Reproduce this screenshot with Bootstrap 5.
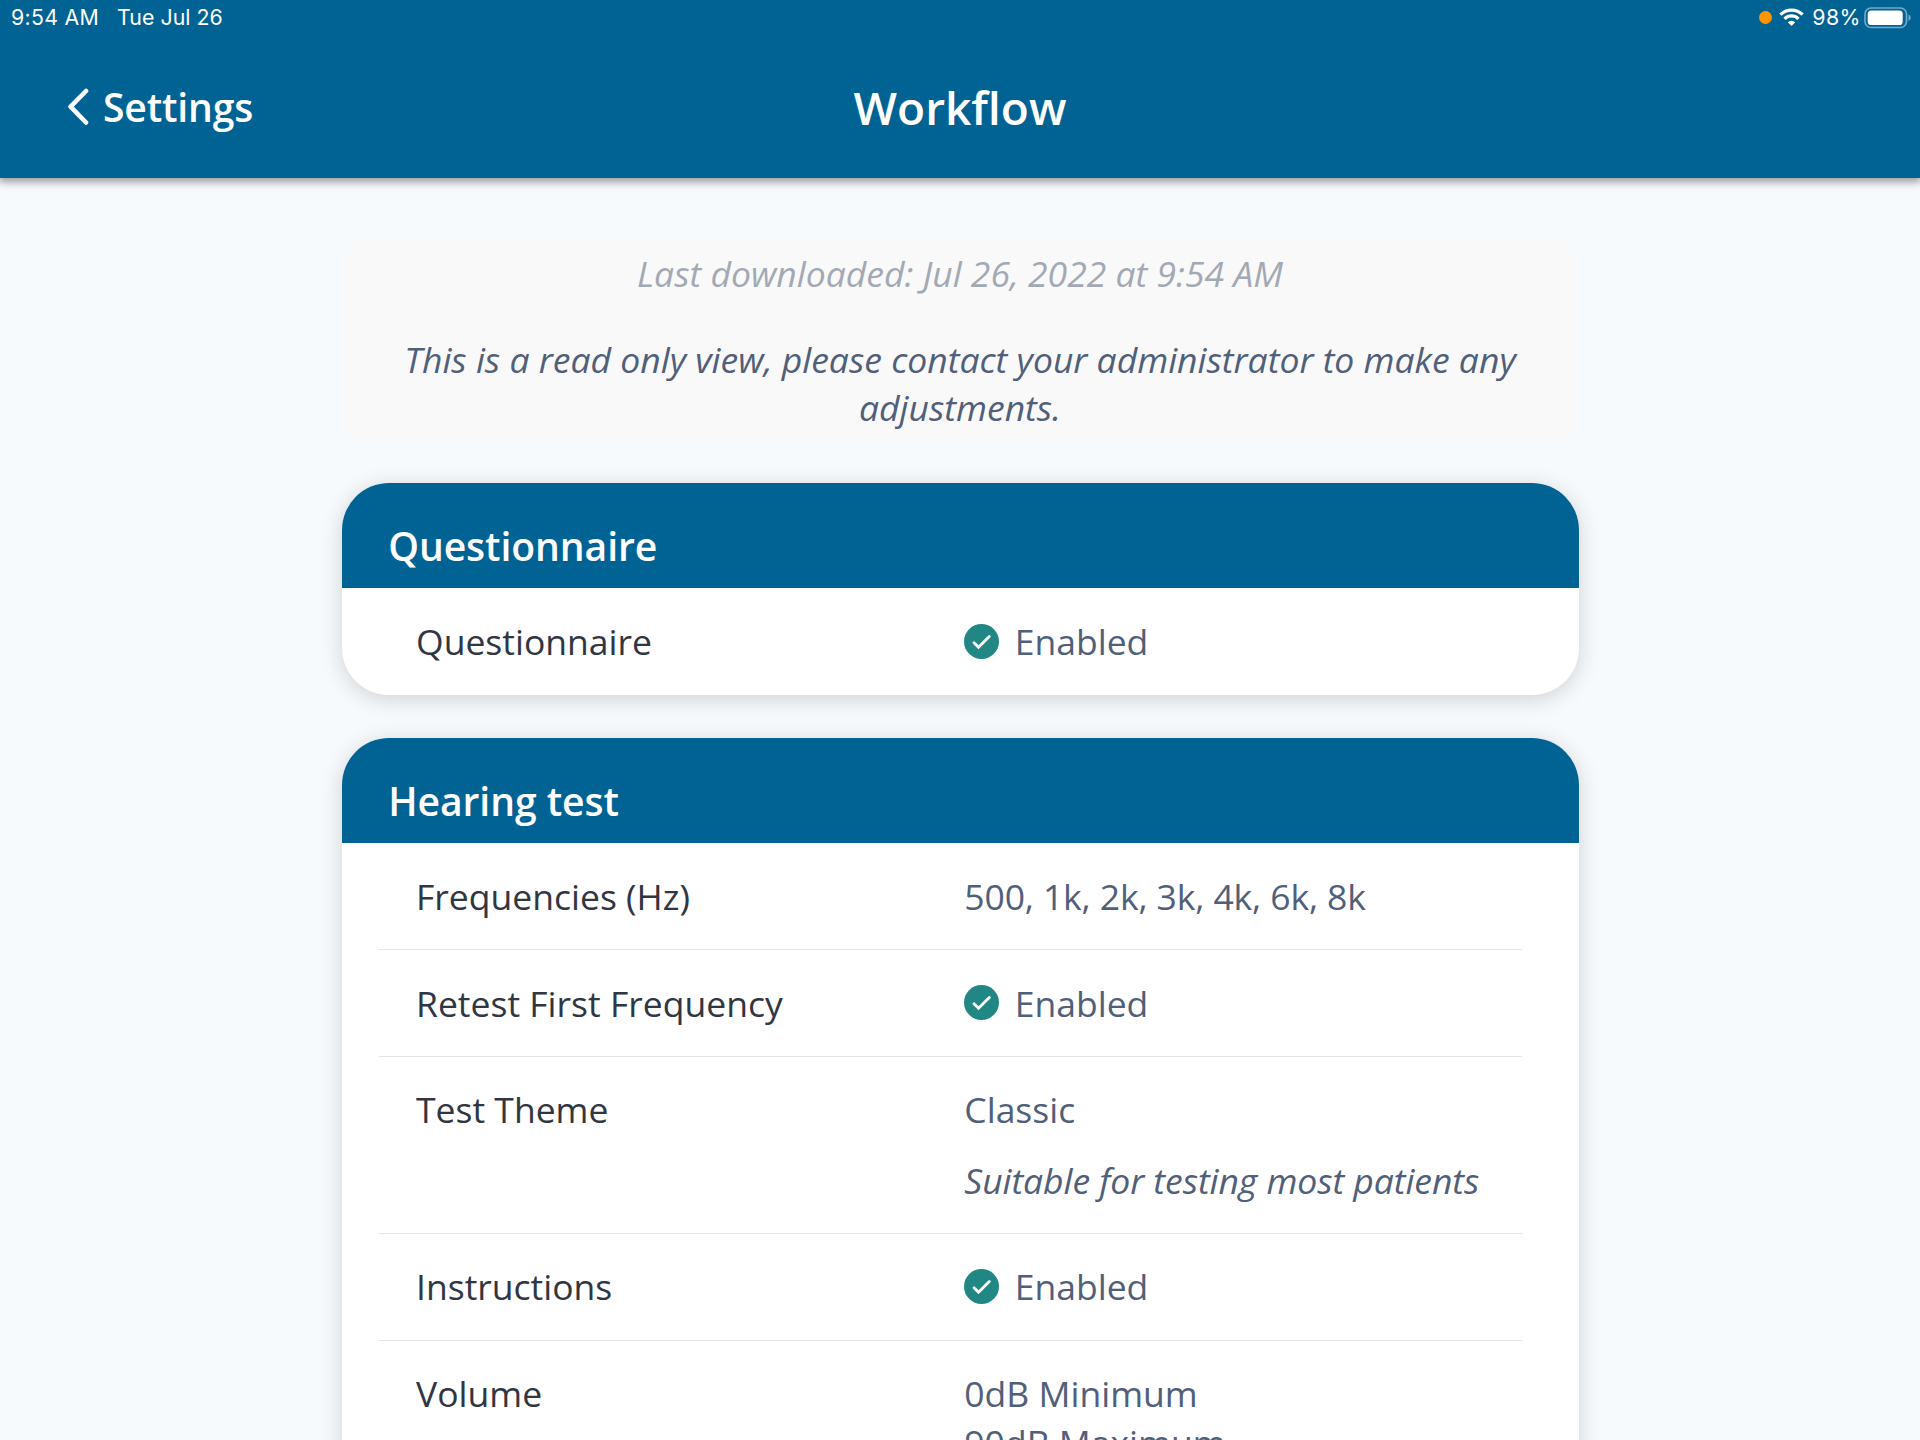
<!DOCTYPE html>
<html lang="en">
<head>
<meta charset="utf-8">
<meta name="viewport" content="width=device-width, initial-scale=1">
<title>Workflow</title>
<link href="https://cdn.jsdelivr.net/npm/bootstrap@5.3.0/dist/css/bootstrap.min.css" rel="stylesheet">
<style>
  :root { --brand: #006394; --ink: #303642; --slate: #50607a; }
  body { background: #f6fafd; font-family: "Open Sans", sans-serif; font-size: 35.52px; line-height: 48.4px; color: var(--slate); }
  .top-bar { height: 178px; background: var(--brand); color: #fff; box-shadow: 0 3px 8px 1px rgba(0,0,0,.38); z-index: 2; }
  .status-line { height: 35px; padding: 0 9px 0 11px; font-family: Inter, sans-serif; font-size: 21.3px; line-height: 35px; letter-spacing: .3px; }
  .status-date { margin-left: 18px; letter-spacing: .05px; }
  .mic-dot { width: 13.4px; height: 13.4px; border-radius: 50%; background: #ff9500; margin-right: 7px; }
  .battery-level { margin-left: 8px; letter-spacing: .5px; margin-right: -1px; }
  .nav-line { height: 143px; padding-left: 67px; display: grid; grid-template-columns: 1fr auto 1fr; }
  .back-link { font-size: 39.1px; font-weight: 600; line-height: 53px; padding-top: 45px; letter-spacing: -.15px; }
  .back-link svg { margin-right: 14px; }
  .page-title { font-size: 46px; font-weight: 600; line-height: 62px; padding-top: 41px; margin: 0 67px 0 0; }
  .column-wrap { width: 1237px; padding-top: 60.5px; }
  .notice { background: #f9f9f9; border-radius: 32px; padding: 10.8px 50px 9.5px; margin-bottom: 42.3px; }
  .notice p { margin: 0 0 36.8px; }
  .notice p:last-child { margin: 0; }
  .downloaded { color: #a2a9b5; }
  .panel { border: 0; border-radius: 47px; overflow: hidden; margin-bottom: 42.9px; background: #fff; box-shadow: 0 4px 22px rgba(0,0,0,.16); }
  .panel-title { background: var(--brand); color: #fff; font-size: 39.1px; font-weight: 600; line-height: 53.3px; padding: 35.6px 46.7px 16.4px; margin: 0; letter-spacing: -.06px; }
  .setting { margin: 0 56.5px 0 37.5px; padding: 28.6px 0 28.7px 37px; display: grid; grid-template-columns: 548.3px 1fr; border-bottom: 1px solid #e1e4e9; }
  .setting:last-child { border-bottom-color: transparent; }
  .setting dt { font-weight: 400; color: var(--ink); }
  .setting dd { margin: 0; white-space: nowrap; }
  .setting .freqs { letter-spacing: -.14px; }
  .setting .hint { margin-top: 22.1px; letter-spacing: -.06px; }
  .tick { width: 35px; height: 35px; margin-right: 15.4px; }
</style>
<script src="https://cdn.jsdelivr.net/npm/bootstrap@5.3.0/dist/js/bootstrap.bundle.min.js"></script>
</head>
<body class="vh-100 overflow-hidden">
<svg class="d-none">
  <symbol id="tick" viewBox="0 0 35 35">
    <circle cx="17.5" cy="17.5" r="17.5" fill="#218784"/>
    <path d="M10 18.7l4.5 4.5L25.3 12.4" fill="none" stroke="#fff" stroke-width="2.8" stroke-linecap="round"/>
  </symbol>
</svg>
<header class="top-bar position-relative">
  <div class="status-line d-flex align-items-center">
    <span>9:54 AM</span><span class="status-date">Tue Jul 26</span>
    <span class="mic-dot ms-auto"></span>
    <svg width="25" height="19" viewBox="0 0 25 19" fill="none" stroke="#fff" stroke-width="3.3">
      <path d="M1.4 6.7a15.6 15.6 0 0 1 22.2 0M5.5 10.8a9.8 9.8 0 0 1 14 0"/>
      <path d="M8.8 14.2a5.2 5.2 0 0 1 7.4 0L12.5 18z" fill="#fff" stroke="none"/>
    </svg>
    <span class="battery-level">98%</span>
    <svg class="ms-1" width="47" height="22" viewBox="0 0 47 22">
      <rect x="1" y="1" width="41.5" height="19.5" rx="6" fill="none" stroke="#fff" stroke-opacity=".45" stroke-width="1.7"/>
      <rect x="3.7" y="3.6" width="35" height="14.4" rx="3.6" fill="#fff"/>
      <path d="M44.5 7.5q2.3 1 2.3 3.3t-2.3 3.3z" fill="#fff" opacity=".45"/>
    </svg>
  </div>
  <nav class="nav-line">
    <a class="back-link d-flex text-white text-decoration-none" href="#">
      <svg width="22" height="53" viewBox="0 0 22 53" fill="none" stroke="#fff" stroke-width="4.6" stroke-linecap="round" stroke-linejoin="round"><path d="M19 11L3.6 26.7 19 42.5"/></svg>
      <span>Settings</span>
    </a>
    <h1 class="page-title">Workflow</h1>
  </nav>
</header>
<main class="column-wrap mx-auto">
  <section class="notice text-center fst-italic">
    <p class="downloaded">Last downloaded: Jul 26, 2022 at 9:54 AM</p>
    <p>This is a read only view, please contact your administrator to make any adjustments.</p>
  </section>
  <section class="card panel">
    <h2 class="panel-title">Questionnaire</h2>
    <dl class="mb-0">
      <div class="setting"><dt>Questionnaire</dt><dd class="d-flex align-items-center"><svg class="tick"><use href="#tick"/></svg>Enabled</dd></div>
    </dl>
  </section>
  <section class="card panel">
    <h2 class="panel-title">Hearing test</h2>
    <dl class="mb-0">
      <div class="setting"><dt>Frequencies (Hz)</dt><dd class="freqs">500, 1k, 2k, 3k, 4k, 6k, 8k</dd></div>
      <div class="setting"><dt>Retest First Frequency</dt><dd class="d-flex align-items-center"><svg class="tick"><use href="#tick"/></svg>Enabled</dd></div>
      <div class="setting"><dt>Test Theme</dt><dd>Classic<div class="hint fst-italic">Suitable for testing most patients</div></dd></div>
      <div class="setting"><dt>Instructions</dt><dd class="d-flex align-items-center"><svg class="tick"><use href="#tick"/></svg>Enabled</dd></div>
      <div class="setting"><dt>Volume</dt><dd>0dB Minimum<br>90dB Maximum</dd></div>
    </dl>
  </section>
</main>
</body>
</html>
